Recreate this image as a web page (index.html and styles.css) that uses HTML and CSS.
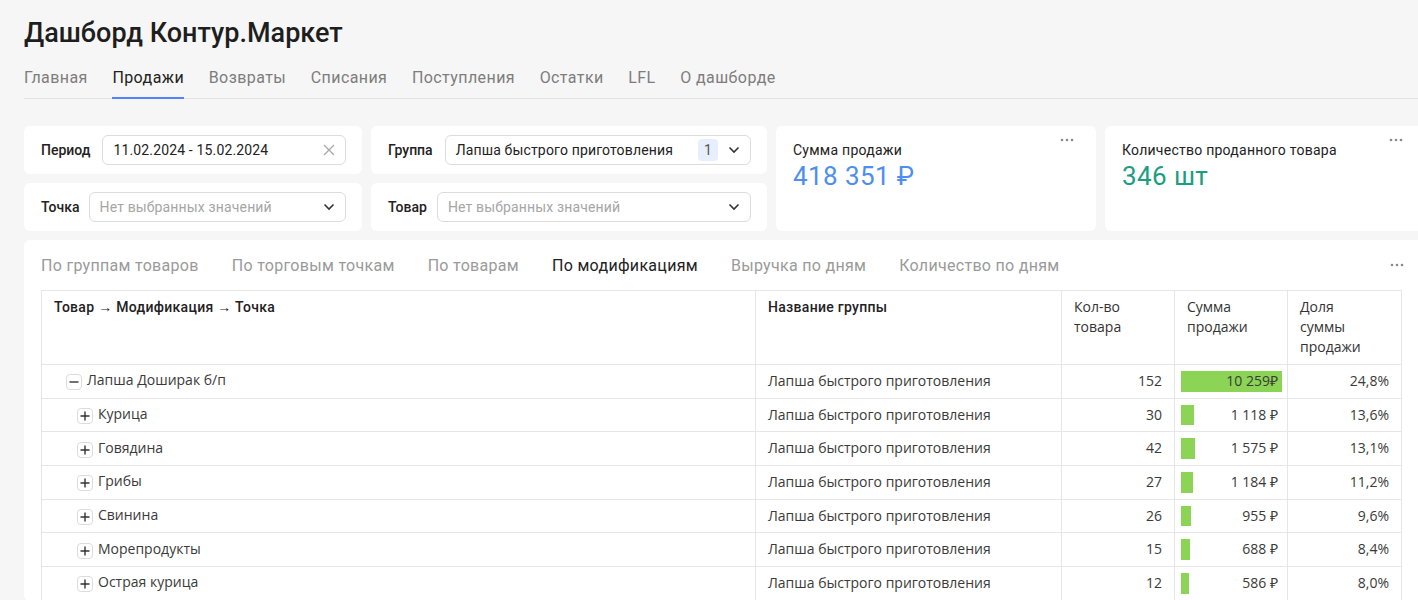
FILE: index.html
```html
<!DOCTYPE html>
<html lang="ru">
<head>
  <meta charset="UTF-8">
  <title>Дашборд Контур.Маркет</title>
  <link rel="stylesheet" href="styles.css">
</head>
<body>
  <div class="page">
    <h1 class="title">Дашборд Контур.Маркет</h1>
    <nav class="tabs">
      <a class="tab">Главная</a>
      <a class="tab active">Продажи</a>
      <a class="tab">Возвраты</a>
      <a class="tab">Списания</a>
      <a class="tab">Поступления</a>
      <a class="tab">Остатки</a>
      <a class="tab">LFL</a>
      <a class="tab">О дашборде</a>
    </nav>

    <div class="widgets">
      <div class="card filter f-period">
        <span class="label">Период</span>
        <div class="input">
          <span class="value">11.02.2024 - 15.02.2024</span>
          <svg class="clear" width="12" height="12" viewBox="0 0 12 12"><path d="M1 1l10 10M11 1L1 11" stroke="#a8a8a8" stroke-width="1.3" fill="none"/></svg>
        </div>
      </div>
      <div class="card filter f-group">
        <span class="label">Группа</span>
        <div class="input">
          <span class="value">Лапша быстрого приготовления</span>
          <span class="count">1</span>
          <svg class="chevron" width="12" height="8" viewBox="0 0 12 8"><path d="M1.5 1.5l4.5 4.5 4.5-4.5" stroke="#333" stroke-width="1.6" fill="none"/></svg>
        </div>
      </div>
      <div class="card metric m-sum">
        <svg class="dots" width="14" height="4" viewBox="0 0 14 4"><circle cx="2" cy="2" r="1.3" fill="#8a8a8a"/><circle cx="7" cy="2" r="1.3" fill="#8a8a8a"/><circle cx="12" cy="2" r="1.3" fill="#8a8a8a"/></svg>
        <div class="metric-label">Сумма продажи</div>
        <div class="metric-value blue">418 351 ₽</div>
      </div>
      <div class="card metric m-qty">
        <svg class="dots" width="14" height="4" viewBox="0 0 14 4"><circle cx="2" cy="2" r="1.3" fill="#8a8a8a"/><circle cx="7" cy="2" r="1.3" fill="#8a8a8a"/><circle cx="12" cy="2" r="1.3" fill="#8a8a8a"/></svg>
        <div class="metric-label">Количество проданного товара</div>
        <div class="metric-value green">346 шт</div>
      </div>
      <div class="card filter f-point">
        <span class="label">Точка</span>
        <div class="input">
          <span class="value placeholder">Нет выбранных значений</span>
          <svg class="chevron" width="12" height="8" viewBox="0 0 12 8"><path d="M1.5 1.5l4.5 4.5 4.5-4.5" stroke="#333" stroke-width="1.6" fill="none"/></svg>
        </div>
      </div>
      <div class="card filter f-goods">
        <span class="label">Товар</span>
        <div class="input">
          <span class="value placeholder">Нет выбранных значений</span>
          <svg class="chevron" width="12" height="8" viewBox="0 0 12 8"><path d="M1.5 1.5l4.5 4.5 4.5-4.5" stroke="#333" stroke-width="1.6" fill="none"/></svg>
        </div>
      </div>
    </div>

    <div class="card table-card">
      <div class="table-head">
        <div class="table-tabs">
          <span>По группам товаров</span>
          <span>По торговым точкам</span>
          <span>По товарам</span>
          <span class="active">По модификациям</span>
          <span>Выручка по дням</span>
          <span>Количество по дням</span>
        </div>
        <svg class="head-dots" width="14" height="4" viewBox="0 0 14 4"><circle cx="2" cy="2" r="1.3" fill="#8a8a8a"/><circle cx="7" cy="2" r="1.3" fill="#8a8a8a"/><circle cx="12" cy="2" r="1.3" fill="#8a8a8a"/></svg>
      </div>
      <table class="grid">
        <colgroup>
          <col style="width:714px">
          <col style="width:306px">
          <col style="width:113px">
          <col style="width:113px">
          <col style="width:114px">
        </colgroup>
        <thead>
          <tr>
            <th>Товар → Модификация → Точка</th>
            <th>Название группы</th>
            <th class="alt">Кол-во<br>товара</th>
            <th class="alt">Сумма<br>продажи</th>
            <th class="alt">Доля<br>суммы<br>продажи</th>
          </tr>
        </thead>
        <tbody>
          <tr>
            <td class="tree lvl1"><span class="toggle"><svg width="10" height="10" viewBox="0 0 10 10"><path d="M0.5 5h9" stroke="#333" stroke-width="1.4"/></svg></span>Лапша Доширак б/п</td>
            <td>Лапша быстрого приготовления</td>
            <td class="num">152</td>
            <td class="bar-cell"><div class="bar" style="width:101px"></div><span>10 259₽</span></td>
            <td class="num">24,8%</td>
          </tr>
          <tr>
            <td class="tree lvl2"><span class="toggle"><svg width="10" height="10" viewBox="0 0 10 10"><path d="M0.5 5h9M5 0.5v9" stroke="#333" stroke-width="1.4"/></svg></span>Курица</td>
            <td>Лапша быстрого приготовления</td>
            <td class="num">30</td>
            <td class="bar-cell"><div class="bar" style="width:13px"></div><span>1 118 ₽</span></td>
            <td class="num">13,6%</td>
          </tr>
          <tr>
            <td class="tree lvl2"><span class="toggle"><svg width="10" height="10" viewBox="0 0 10 10"><path d="M0.5 5h9M5 0.5v9" stroke="#333" stroke-width="1.4"/></svg></span>Говядина</td>
            <td>Лапша быстрого приготовления</td>
            <td class="num">42</td>
            <td class="bar-cell"><div class="bar" style="width:14px"></div><span>1 575 ₽</span></td>
            <td class="num">13,1%</td>
          </tr>
          <tr>
            <td class="tree lvl2"><span class="toggle"><svg width="10" height="10" viewBox="0 0 10 10"><path d="M0.5 5h9M5 0.5v9" stroke="#333" stroke-width="1.4"/></svg></span>Грибы</td>
            <td>Лапша быстрого приготовления</td>
            <td class="num">27</td>
            <td class="bar-cell"><div class="bar" style="width:12px"></div><span>1 184 ₽</span></td>
            <td class="num">11,2%</td>
          </tr>
          <tr>
            <td class="tree lvl2"><span class="toggle"><svg width="10" height="10" viewBox="0 0 10 10"><path d="M0.5 5h9M5 0.5v9" stroke="#333" stroke-width="1.4"/></svg></span>Свинина</td>
            <td>Лапша быстрого приготовления</td>
            <td class="num">26</td>
            <td class="bar-cell"><div class="bar" style="width:10px"></div><span>955 ₽</span></td>
            <td class="num">9,6%</td>
          </tr>
          <tr>
            <td class="tree lvl2"><span class="toggle"><svg width="10" height="10" viewBox="0 0 10 10"><path d="M0.5 5h9M5 0.5v9" stroke="#333" stroke-width="1.4"/></svg></span>Морепродукты</td>
            <td>Лапша быстрого приготовления</td>
            <td class="num">15</td>
            <td class="bar-cell"><div class="bar" style="width:9px"></div><span>688 ₽</span></td>
            <td class="num">8,4%</td>
          </tr>
          <tr>
            <td class="tree lvl2"><span class="toggle"><svg width="10" height="10" viewBox="0 0 10 10"><path d="M0.5 5h9M5 0.5v9" stroke="#333" stroke-width="1.4"/></svg></span>Острая курица</td>
            <td>Лапша быстрого приготовления</td>
            <td class="num">12</td>
            <td class="bar-cell"><div class="bar" style="width:8px"></div><span>586 ₽</span></td>
            <td class="num">8,0%</td>
          </tr>
        </tbody>
      </table>
    </div>
  </div>
</body>
</html>
```

FILE: styles.css
```css
html, body {
  overflow: hidden;
}
body {
  margin: 0;
  font-family: Roboto, "Noto Sans", sans-serif;
  background: #f6f6f6;
  color: #222;
}
.page {
  width: 1420px;
  padding: 0 0 0 24px;
}
.title {
  margin: 16px 0 0;
  font-size: 27px;
  line-height: 34px;
  font-weight: 500;
  color: #1e1e1e;
}
.tabs {
  display: flex;
  gap: 24.6px;
  margin-top: 18px;
  border-bottom: 1px solid #e2e2e2;
}
.tab {
  font-size: 16px;
  line-height: 20px;
  letter-spacing: 0.42px;
  color: #7d7d7d;
  padding-bottom: 9px;
  border-bottom: 2px solid transparent;
  margin-bottom: -1px;
}
.tab.active {
  color: #222;
  border-bottom-color: #5282ff;
}

.widgets {
  display: grid;
  grid-template-columns: 338px 396px 320px 320px;
  grid-template-rows: 48px 48px;
  column-gap: 9px;
  row-gap: 9px;
  margin-top: 27px;
}
.card {
  background: #fff;
  border-radius: 6px;
}
.filter {
  display: flex;
  align-items: center;
  padding: 0 16px 0 17px;
  gap: 12px;
}
.f-period { grid-column: 1; grid-row: 1; }
.f-group { grid-column: 2; grid-row: 1; }
.f-point { grid-column: 1; grid-row: 2; gap: 9px; }
.f-goods { grid-column: 2; grid-row: 2; gap: 10px; }
.m-sum { grid-column: 3; grid-row: 1 / 3; }
.m-qty { grid-column: 4; grid-row: 1 / 3; }

.label {
  font-size: 14px;
  font-weight: 500;
  color: #222;
}
.input {
  flex: 1;
  height: 30px;
  box-sizing: border-box;
  border: 1px solid #dcdcdc;
  border-radius: 6px;
  display: flex;
  align-items: center;
  padding: 0 10px;
  font-size: 14px;
  letter-spacing: 0.15px;
}
.input .value {
  flex: 1;
  color: #222;
}
.input .placeholder {
  color: #a6a6a6;
}
.count {
  background: #e7eefc;
  color: #555;
  border-radius: 4px;
  padding: 2px 6px;
  line-height: 18px;
  margin-right: 10px;
}

.metric {
  position: relative;
  padding: 14px 17px;
}
.metric-label {
  font-size: 14px;
  line-height: 20px;
  letter-spacing: 0.25px;
  color: #222;
}
.metric-value {
  font-size: 26px;
  line-height: 32px;
  font-weight: 400;
  letter-spacing: 0.4px;
}
.blue { color: #4d8ef0; }
.green { color: #1b9e80; }
.dots {
  position: absolute;
  top: 12px;
  right: 22px;
}

.table-card {
  margin-top: 9px;
  width: 1420px;
  padding: 0 0 0 17px;
}
.table-head {
  width: 1363px;
  height: 50px;
  display: flex;
  align-items: center;
}
.table-tabs {
  display: flex;
  gap: 33px;
  font-size: 16px;
  letter-spacing: 0.3px;
  color: #9a9a9a;
}
.table-tabs .active {
  color: #222;
}
.head-dots {
  margin-left: auto;
}

.grid {
  border-collapse: collapse;
  table-layout: fixed;
  width: 1360px;
  font-size: 14px;
  color: #3a3a3a;
}
.grid th, .grid td {
  border: 1px solid #e6e6e6;
  padding: 0 12px;
}
.grid th {
  text-align: left;
  vertical-align: top;
  font-weight: 500;
  letter-spacing: 0.3px;
  color: #222;
  line-height: 20px;
  padding-top: 6px;
  padding-bottom: 7px;
  height: 58px;
}
.grid th.alt {
  font-family: "Open Sans", sans-serif;
  font-weight: 400;
  letter-spacing: 0;
  color: #333;
}
.grid td {
  height: 30.7px;
  padding-bottom: 2px;
  font-family: "Open Sans", sans-serif;
}
.tree {
  white-space: nowrap;
}
.tree .toggle {
  display: inline-flex;
  align-items: center;
  justify-content: center;
  width: 16px;
  height: 16px;
  box-sizing: border-box;
  border: 1px solid #dcdcdc;
  border-radius: 4px;
  vertical-align: -2px;
  margin-right: 5px;
}
.lvl1 { padding-left: 24px !important; }
.lvl2 { padding-left: 35px !important; }
.num {
  text-align: right;
}
.bar-cell {
  position: relative;
  text-align: right;
  padding: 0 9px 2px 6px !important;
}
.bar {
  position: absolute;
  left: 6px;
  top: 6px;
  bottom: 6px;
  background: #8bd455;
}
.bar-cell span {
  position: relative;
}
```
